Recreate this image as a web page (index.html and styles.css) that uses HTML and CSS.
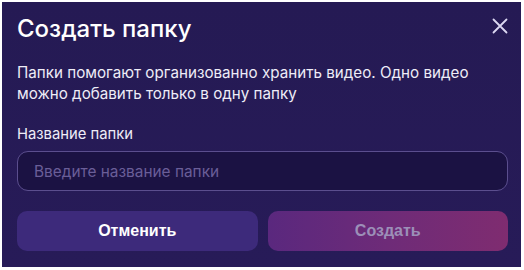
FILE: index.html
```html
<!DOCTYPE html>
<html lang="ru">
<head>
<meta charset="utf-8">
<title>Создать папку</title>
<link rel="stylesheet" href="styles.css">
</head>
<body>
<div class="dialog">
  <div class="header">
    <h1 class="title">Создать папку</h1>
    <button class="close" aria-label="Закрыть">
      <svg width="16" height="16" viewBox="0 0 16 16"><path d="M1.5 1.5 L14.5 14.5 M14.5 1.5 L1.5 14.5" stroke="#dcd8f2" stroke-width="1.8" stroke-linecap="round"/></svg>
    </button>
  </div>
  <p class="desc">Папки помогают организованно хранить видео. Одно видео можно добавить только в одну папку</p>
  <label class="label" for="name">Название папки</label>
  <input class="input" id="name" type="text" placeholder="Введите название папки">
  <div class="actions">
    <button class="btn cancel">Отменить</button>
    <button class="btn create">Создать</button>
  </div>
</div>
</body>
</html>
```

FILE: styles.css
```css
html, body { margin: 0; padding: 0; background: #ffffff; }
body { padding: 2px 3px 3px 2px; }
.dialog {
  box-sizing: border-box;
  height: 265px;
  background: linear-gradient(180deg, #251a54 0%, #271b58 100%);
  padding: 12px 13px 0 15px;
  font-family: Inter, "Noto Sans", sans-serif;
  color: #f2f0fa;
  display: flex;
  flex-direction: column;
}
.header { display: flex; justify-content: space-between; align-items: flex-start; }
.title { margin: 0; font-size: 24px; line-height: 30px; font-weight: 500; color: #ffffff; }
.close { background: none; border: 0; padding: 0; margin: 4px 0 0 0; width: 16px; height: 16px; display: flex; cursor: pointer; }
.desc { margin: 18px 0 0; font-size: 15.2px; line-height: 21px; color: #eeecf7; }
.label { margin-top: 20px; font-size: 14.8px; line-height: 20px; color: #eeecf7; }
.input {
  margin-top: 7px;
  box-sizing: border-box;
  height: 40px;
  width: 100%;
  background: #1b1243;
  border: 1px solid #5b4e8e;
  border-radius: 11px;
  padding: 0 16px;
  font-family: Inter, "Noto Sans", sans-serif;
  font-size: 15.4px;
  color: #fff;
  outline: none;
}
.input::placeholder { color: #6a5e98; }
.actions { margin-top: 20px; display: flex; gap: 10px; }
.btn {
  flex: 1;
  height: 40px;
  border: 0;
  border-radius: 10px;
  font-family: "Liberation Sans", Arial, sans-serif;
  font-weight: 700;
  font-size: 16px;
}
.cancel { background: #3d2a7b; color: #ffffff; }
.create { background: linear-gradient(90deg, #5a287e 0%, #6e2b78 50%, #7f2c70 100%); color: #9c8fb8; }
```
